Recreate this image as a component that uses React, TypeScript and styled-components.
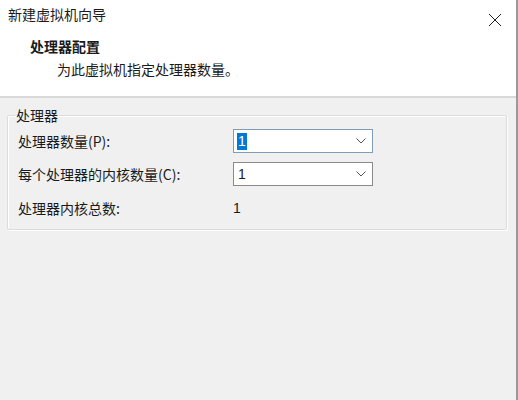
import React from "react";
import styled, { createGlobalStyle } from "styled-components";

const Global = createGlobalStyle`
  html, body { margin: 0; padding: 0; background: #f0f0f0; }
  body { font-family: "Noto Sans CJK SC", "Noto Sans", sans-serif; color: #1a1a1a; }
`;

const Window = styled.div`
  width: 518px;
  height: 400px;
  box-sizing: border-box;
  background: #f0f0f0;
  border-right: 2px solid #9a9a9a;
  display: flex;
  flex-direction: column;
  overflow: hidden;
`;

const Header = styled.div`
  background: #ffffff;
  height: 98px;
  box-sizing: border-box;
  border-bottom: 2px solid #d8d8d8;
  position: relative;
  padding: 5px 0 0 8px;
`;

const WinTitle = styled.div`
  font-size: 14px;
  line-height: 19px;
  color: #1a1a1a;
`;

const CloseBtn = styled.div`
  position: absolute;
  right: 14px;
  top: 8px;
  width: 14px;
  height: 14px;
`;

const PageTitle = styled.div`
  font-size: 14px;
  font-weight: 700;
  line-height: 19px;
  margin: 13px 0 0 22px;
`;

const PageSub = styled.div`
  font-size: 14px;
  line-height: 19px;
  margin: 4px 0 0 49px;
`;

const Body = styled.div`
  padding: 9px 9px 0 7px;
`;

const Group = styled.fieldset`
  margin: 0;
  padding: 0 10px 3px 10px;
  border: 1px solid #dcdcdc;
  box-shadow: inset 1px 1px 0 #ffffff, 1px 1px 0 #ffffff;
  border-radius: 2px;
  display: grid;
  grid-template-columns: 215px 140px;
`;

const Legend = styled.legend`
  font-size: 14px;
  line-height: 17px;
  padding: 0 1px;
  margin-left: -3px;
`;

const Label = styled.div<{ h: number }>`
  font-size: 14px;
  line-height: 19px;
  display: flex;
  align-items: center;
  height: ${(p) => p.h}px;
`;

const Cell = styled.div<{ h: number }>`
  height: ${(p) => p.h}px;
  display: flex;
  align-items: center;
`;

const Combo = styled.div<{ focused?: boolean }>`
  width: 140px;
  height: 24px;
  box-sizing: border-box;
  background: #ffffff;
  border: 1px solid ${(p) => (p.focused ? "#7f9db9" : "#8a8a8a")};
  display: flex;
  align-items: center;
  justify-content: space-between;
  padding: 0 6px 0 3px;
  font-size: 14px;
  font-family: "Liberation Sans", "Noto Sans CJK SC", sans-serif;
`;

const Value = styled.span<{ selected?: boolean }>`
  background: ${(p) => (p.selected ? "#0078d7" : "transparent")};
  color: ${(p) => (p.selected ? "#ffffff" : "#1a1a1a")};
  padding: 0 1px;
  line-height: 17px;
`;

const Plain = styled.span`
  font-size: 14px;
  font-family: "Liberation Sans", sans-serif;
`;

const Chevron = () => (
  <svg width="10" height="6" viewBox="0 0 10 6">
    <path d="M0.5 0.5 L5 5 L9.5 0.5" fill="none" stroke="#555" strokeWidth="1" />
  </svg>
);

export default function App() {
  return (
    <>
      <Global />
      <Window>
        <Header>
          <WinTitle>新建虚拟机向导</WinTitle>
          <CloseBtn>
            <svg width="14" height="14" viewBox="0 0 14 14">
              <path d="M1 1 L13 13 M13 1 L1 13" stroke="#222" strokeWidth="1" />
            </svg>
          </CloseBtn>
          <PageTitle>处理器配置</PageTitle>
          <PageSub>为此虚拟机指定处理器数量。</PageSub>
        </Header>
        <Body>
          <Group>
            <Legend>处理器</Legend>
            <Label h={34}>处理器数量(P):</Label>
            <Cell h={34}>
              <Combo focused>
                <Value selected>1</Value>
                <Chevron />
              </Combo>
            </Cell>
            <Label h={32}>每个处理器的内核数量(C):</Label>
            <Cell h={32}>
              <Combo>
                <Value>1</Value>
                <Chevron />
              </Combo>
            </Cell>
            <Label h={36}>处理器内核总数:</Label>
            <Cell h={36}>
              <Plain>1</Plain>
            </Cell>
          </Group>
        </Body>
      </Window>
    </>
  );
}
